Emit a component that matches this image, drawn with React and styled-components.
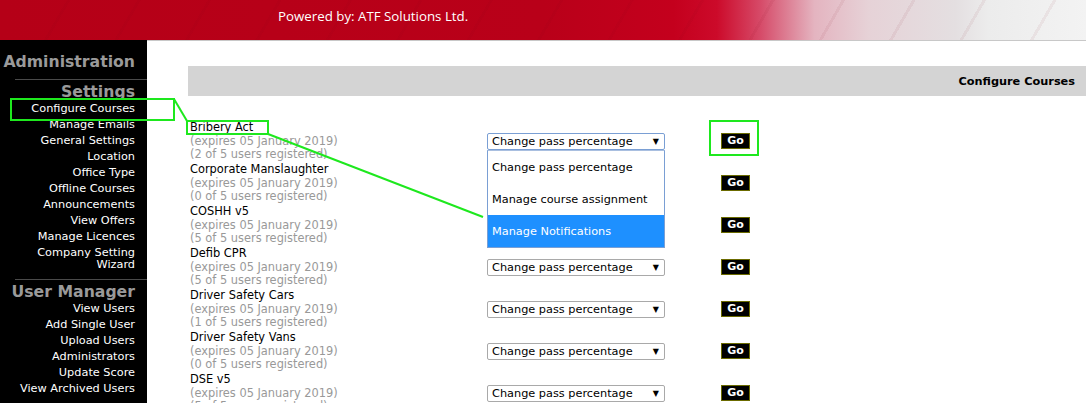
import React from 'react';
import styled, { createGlobalStyle } from 'styled-components';

const GlobalStyle = createGlobalStyle`
  html, body {
    margin: 0;
    padding: 0;
    background: #fff;
    overflow: hidden;
  }
  body {
    font-family: "DejaVu Sans", Verdana, sans-serif;
  }
`;

const Page = styled.div`
  position: relative;
  width: 1086px;
  height: 403px;
  overflow: hidden;
  background: #fff;
`;

const Header = styled.header`
  height: 40px;
  box-sizing: border-box;
  padding: 7px 0 0 278px;
  background:
    repeating-linear-gradient(120deg, rgba(255,255,255,0) 0 58px, rgba(120,0,20,0.06) 58px 61px),
    linear-gradient(to right, #b50017 0%, #b90019 50%, #c4001d 62%, #cc0a2a 66%, #d64a68 70%, #e4b4c0 75%, #e6d2d7 80%, #e4dfe1 88%, #ececec 91%, #f3f3f3 100%);
`;

const Powered = styled.div`
  font-family: "Open Sans", "Noto Sans", sans-serif;
  font-size: 13.3px;
  color: #fff;
  line-height: 18px;
`;

const Body = styled.div`
  display: flex;
  height: 363px;
`;

const Sidebar = styled.nav`
  width: 147px;
  flex-shrink: 0;
  background: #000;
  box-sizing: border-box;
  padding-top: 12px;
  text-align: right;
`;

const SectionTitle = styled.div`
  font-size: 15.7px;
  font-weight: bold;
  line-height: 20px;
  color: #9a9a9a;
  padding-right: 12px;
  margin-bottom: ${p => p.$mb || 0}px;
`;

const Rule = styled.div`
  margin: ${p => p.$m};
  margin-left: 15px;
  height: 1px;
  background: #4a4a4a;
`;

const NavList = styled.div`
  display: flex;
  flex-direction: column;
  gap: 4px;
  padding: 0 12px 0 15px;
`;

const NavItem = styled.a`
  display: block;
  color: #fff;
  font-size: 11.3px;
  line-height: 12px;
  text-decoration: none;
`;

const Main = styled.main`
  flex: 1;
  border-top: 1px solid #c8c8c8;
  padding: 25px 0 0 41px;
`;

const TitleBar = styled.div`
  height: 30px;
  background: #d4d4d4;
  display: flex;
  align-items: center;
  justify-content: flex-end;
  padding-right: 11px;
  font-size: 11.3px;
  font-weight: bold;
  color: #000;
`;

const CourseTable = styled.div`
  margin-top: 25px;
  display: grid;
  grid-template-columns: 299px 233px auto;
  grid-auto-rows: 42px;
  align-items: start;
`;

const CourseInfo = styled.div`
  padding-left: 2px;
  font-size: 11.4px;
  line-height: 13.6px;
  color: #000;
`;

const Muted = styled.div`
  color: #999;
`;

const SelectWrap = styled.div`
  position: relative;
  width: 178px;
  margin-top: 12px;
`;

const FakeSelect = styled.div`
  height: 17px;
  box-sizing: border-box;
  border: 1px solid ${p => (p.$open ? '#7a9fd4' : '#a9a9a9')};
  border-radius: 2px;
  background: #fff;
  display: flex;
  align-items: center;
  justify-content: space-between;
  padding: 0 5px 0 4px;
  font-size: 11.3px;
  color: #000;
`;

const Arrow = styled.span`
  font-size: 8px;
  line-height: 8px;
`;

const Options = styled.div`
  position: absolute;
  top: 17px;
  left: 0;
  z-index: 5;
  width: 178px;
  box-sizing: border-box;
  border: 1px solid #7a9fd4;
  border-top-color: #a9bfe0;
  background: #fff;
`;

const Option = styled.div`
  height: 32px;
  display: flex;
  align-items: center;
  padding-left: 4px;
  font-size: 11.3px;
  color: ${p => (p.$active ? '#fff' : '#000')};
  background: ${p => (p.$active ? '#1e90ff' : '#fff')};
`;

const GoCell = styled.div`
  margin-top: 12px;
`;

const GoButton = styled.button`
  display: block;
  width: 29px;
  height: 16px;
  padding: 0;
  margin-left: 1px;
  background: #000;
  color: #fff;
  border: 1px solid #6b6b00;
  font-family: "DejaVu Sans", Verdana, sans-serif;
  font-size: 11px;
  font-weight: bold;
  line-height: 14px;
  cursor: pointer;
`;

const Overlay = styled.svg`
  position: absolute;
  left: 0;
  top: 0;
  pointer-events: none;
`;

const settingsLinks = [
  'Configure Courses', 'Manage Emails', 'General Settings', 'Location', 'Office Type',
  'Offline Courses', 'Announcements', 'View Offers', 'Manage Licences', 'Company Setting Wizard',
];

const userLinks = [
  'View Users', 'Add Single User', 'Upload Users', 'Administrators', 'Update Score', 'View Archived Users',
];

const courses = [
  { name: 'Bribery Act', used: 2 },
  { name: 'Corporate Manslaughter', used: 0 },
  { name: 'COSHH v5', used: 5 },
  { name: 'Defib CPR', used: 5 },
  { name: 'Driver Safety Cars', used: 1 },
  { name: 'Driver Safety Vans', used: 0 },
  { name: 'DSE v5', used: 5 },
];

const actions = ['Change pass percentage', 'Manage course assignment', 'Manage Notifications'];

// green call-outs drawn over the screenshot
const Annotations = () => (
  <Overlay width="1086" height="403" viewBox="0 0 1086 403">
    <g fill="none" stroke="#1ee81e" strokeWidth="2">
      <rect x="11" y="99" width="163" height="21" />
      <line x1="174" y1="99" x2="187" y2="121" />
      <rect x="187" y="121" width="81" height="13" />
      <line x1="268" y1="134" x2="483" y2="217" />
      <rect x="710" y="121" width="48" height="34" />
    </g>
  </Overlay>
);

export default function App() {
  return (
    <Page>
      <GlobalStyle />
      <Header>
        <Powered>Powered by: ATF Solutions Ltd.</Powered>
      </Header>
      <Body>
        <Sidebar>
          <SectionTitle>Administration</SectionTitle>
          <Rule $m="7px 0 2px" />
          <SectionTitle $mb={1}>Settings</SectionTitle>
          <NavList>
            {settingsLinks.map(l => <NavItem key={l} href="#">{l}</NavItem>)}
          </NavList>
          <Rule $m="8px 0 2px" />
          <SectionTitle $mb={1}>User Manager</SectionTitle>
          <NavList>
            {userLinks.map(l => <NavItem key={l} href="#">{l}</NavItem>)}
          </NavList>
        </Sidebar>
        <Main>
          <TitleBar>Configure Courses</TitleBar>
          <CourseTable>
            {courses.map((c, i) => (
              <React.Fragment key={c.name}>
                <CourseInfo>
                  {c.name}
                  <Muted>(expires 05 January 2019)</Muted>
                  <Muted>({c.used} of 5 users registered)</Muted>
                </CourseInfo>
                <SelectWrap>
                  <FakeSelect $open={i === 0}>
                    <span>Change pass percentage</span>
                    <Arrow>▼</Arrow>
                  </FakeSelect>
                  {i === 0 && (
                    <Options>
                      {actions.map(a => (
                        <Option key={a} $active={a === 'Manage Notifications'}>{a}</Option>
                      ))}
                    </Options>
                  )}
                </SelectWrap>
                <GoCell>
                  <GoButton>Go</GoButton>
                </GoCell>
              </React.Fragment>
            ))}
          </CourseTable>
        </Main>
      </Body>
      <Annotations />
    </Page>
  );
}
